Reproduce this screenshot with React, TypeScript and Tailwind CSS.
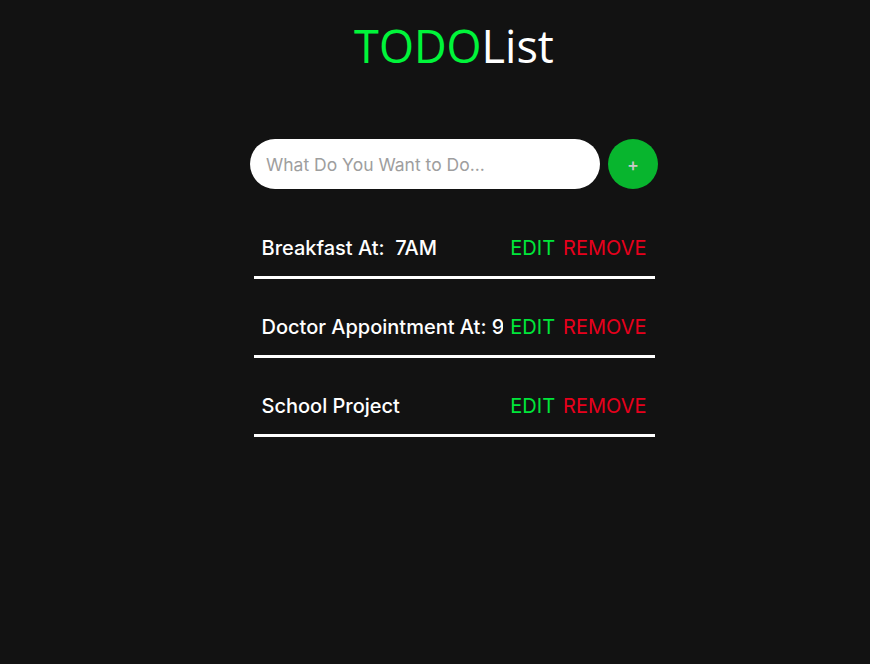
import { useState } from 'react';

type Todo = { id: number; text: string };

const initialTodos: Todo[] = [
    { id: 1, text: 'Breakfast At:  7AM' },
    { id: 2, text: 'Doctor Appointment At: 9AM' },
    { id: 3, text: 'School Project' },
];

const App = () => {
    const [todos, setTodos] = useState<Todo[]>(initialTodos);
    const [value, setValue] = useState('');

    const addTodo = () => {
        if (!value.trim()) return;
        setTodos([...todos, { id: Date.now(), text: value }]);
        setValue('');
    };

    return (
        <div className="min-h-screen bg-[#121212] pl-[38px] font-['Inter',sans-serif]">
            <div className="mx-auto flex w-[408px] flex-col items-center pt-[14px]">
                {/* Title */}
                <h1 className="font-['Open_Sans',sans-serif] text-[45px] leading-[64px] text-white">
                    <span className="text-[#00f53a]">TODO</span>List
                </h1>

                {/* Input row */}
                <div className="mt-[61px] flex w-full items-center gap-2">
                    <input
                        value={value}
                        onChange={(e) => setValue(e.target.value)}
                        placeholder="What Do You Want to Do..."
                        className="h-[50px] w-[350px] rounded-full bg-white px-4 text-[17.5px] text-gray-800 outline-none placeholder:text-[#9e9e9e]"
                    />
                    <button
                        onClick={addTodo}
                        className="flex h-[50px] w-[50px] items-center justify-center rounded-full bg-[#08b52e] text-[18px] font-medium text-[#c9c9c9]"
                    >
                        +
                    </button>
                </div>

                {/* List */}
                <div className="mt-[31px] flex w-[401px] flex-col gap-5 self-center">
                    {todos.map((todo) => (
                        <div
                            key={todo.id}
                            className="flex h-[59px] items-center border-b-[3px] border-white px-2 text-[20px] font-medium"
                        >
                            <div className="min-w-0 flex-1 overflow-hidden whitespace-pre text-white">
                                {todo.text}
                            </div>
                            <button className="ml-[7px] font-normal text-[#00e63a]">EDIT</button>
                            <button
                                onClick={() => setTodos(todos.filter((t) => t.id !== todo.id))}
                                className="ml-2 font-normal text-[#e8001c]"
                            >
                                REMOVE
                            </button>
                        </div>
                    ))}
                </div>
            </div>
        </div>
    );
};

export default App;
